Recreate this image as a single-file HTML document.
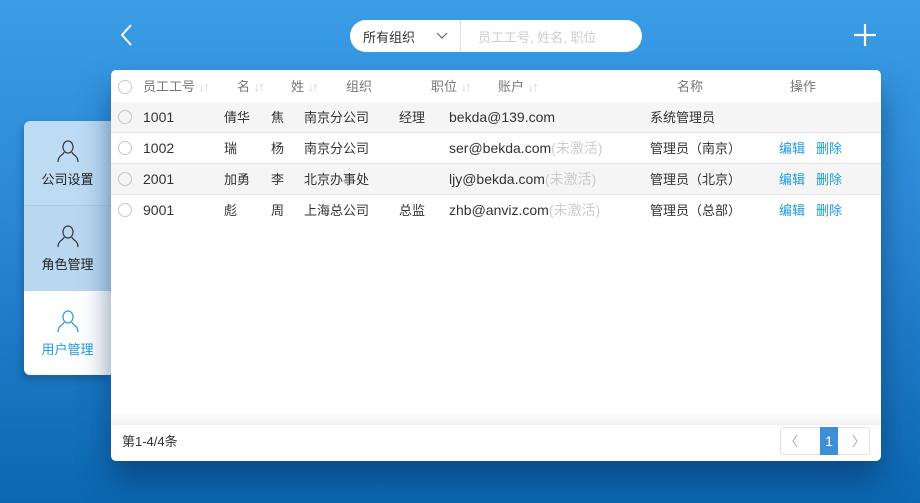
<!DOCTYPE html><html><head><meta charset="utf-8"><style>
*{margin:0;padding:0;box-sizing:border-box}
body{width:920px;height:503px;overflow:hidden;font-family:"Liberation Sans","Noto Sans CJK SC",sans-serif;background:linear-gradient(#3a9de6,#2a86d4 45%,#0b67b0);position:relative;color:#333}
.a{position:absolute}
.pill{left:350px;top:20px;width:292px;height:32px;background:#fff;border-radius:16px;font-size:13px}
.card{left:111px;top:70px;width:770px;height:391px;background:#fff;border-radius:5px;box-shadow:0 20px 30px rgba(5,50,100,.55)}
.side{left:24px;top:121px;width:87px;height:254px;border-radius:6px 0 0 6px;overflow:hidden;box-shadow:-2px 4px 8px rgba(0,0,0,.2)}
.si{height:85px;text-align:center;font-size:13px;color:#222;padding-top:18px}
.si svg{display:block;margin:0 auto 6px}
.row{position:absolute;left:0;width:770px;height:31px;font-size:13px;line-height:31px;color:#333;border-bottom:1px solid #e6e6e6}
.row span,.hd span{position:absolute}
.n{font-size:14px}
.rad{width:14px;height:14px;border:1.5px solid #c8c8c8;border-radius:50%;top:8px;left:7px}
.hd{position:absolute;left:0;top:0;width:770px;height:32px;font-size:13px;line-height:34px;color:#777;box-shadow:0 3px 4px rgba(0,0,0,.06)}
.g{color:#d4d4d4;font-style:normal;letter-spacing:-2px}.b{color:#1c9be0}.s{color:#ccc;font-style:normal}
</style></head><body>
<svg class="a" style="left:118px;top:23px" width="16" height="24"><path d="M13 2 L4 12 L13 22" stroke="#fff" stroke-width="2" fill="none"/></svg>
<svg class="a" style="left:853px;top:23px" width="24" height="24"><path d="M12 1V23M1 12H23" stroke="#fff" stroke-width="2.2"/></svg>
<div class="a pill"><span class="a" style="left:13px;top:7px;color:#333">所有组织</span>
<svg class="a" style="left:86px;top:12px" width="12" height="8"><path d="M1 1L6 6L11 1" stroke="#666" fill="none" stroke-width="1.2"/></svg>
<div class="a" style="left:110px;top:0;width:1px;height:32px;background:#ddd"></div>
<span class="a" style="left:128px;top:7px;color:#ccc">员工工号, 姓名, 职位</span></div>
<div class="a side">
<div class="si" style="background:#bddcf3;border-bottom:1px solid #a9cbe6"><svg width="22" height="24" viewBox="0 0 22 24"><path d="M11 2a5 6 0 1 0 .01 0zM7 13c0 3-6 3-6 10M15 13c0 3 6 3 6 10" stroke="#333" fill="none" stroke-width="1.2"/></svg>公司设置</div>
<div class="si" style="background:#b9d8f0"><svg width="22" height="24" viewBox="0 0 22 24"><path d="M11 2a5 6 0 1 0 .01 0zM7 13c0 3-6 3-6 10M15 13c0 3 6 3 6 10" stroke="#333" fill="none" stroke-width="1.2"/></svg>角色管理</div>
<div class="si" style="background:#fff;color:#1c9be0"><svg width="22" height="24" viewBox="0 0 22 24"><path d="M11 2a5 6 0 1 0 .01 0zM7 13c0 3-6 3-6 10M15 13c0 3 6 3 6 10" stroke="#1c9be0" fill="none" stroke-width="1.2"/></svg>用户管理</div>
</div>
<div class="a card">
<div class="hd"><div class="a rad" style="top:10px"></div><span style="left:32px">员工工号 <i class="g">↓↑</i></span><span style="left:126px">名 <i class="g">↓↑</i></span><span style="left:180px">姓 <i class="g">↓↑</i></span><span style="left:235px">组织</span><span style="left:320px">职位 <i class="g">↓↑</i></span><span style="left:387px">账户 <i class="g">↓↑</i></span><span style="left:566px">名称</span><span style="left:679px">操作</span></div>
<div class="row" style="top:32px;background:#f5f5f5"><div class="a rad"></div><span class="n" style="left:32px">1001</span><span style="left:113px">倩华</span><span style="left:160px">焦</span><span style="left:193px">南京分公司</span><span style="left:288px">经理</span><span class="n" style="left:338px">bekda@139.com</span><span style="left:539px">系统管理员</span></div>
<div class="row" style="top:63px"><div class="a rad"></div><span class="n" style="left:32px">1002</span><span style="left:113px">瑞</span><span style="left:160px">杨</span><span style="left:193px">南京分公司</span><span class="n" style="left:338px">ser@bekda.com<i class="s">(未激活)</i></span><span style="left:539px">管理员（南京）</span><span class="b" style="left:668px">编辑</span><span class="b" style="left:705px">删除</span></div>
<div class="row" style="top:94px;background:#f5f5f5"><div class="a rad"></div><span class="n" style="left:32px">2001</span><span style="left:113px">加勇</span><span style="left:160px">李</span><span style="left:193px">北京办事处</span><span class="n" style="left:338px">ljy@bekda.com<i class="s">(未激活)</i></span><span style="left:539px">管理员（北京）</span><span class="b" style="left:668px">编辑</span><span class="b" style="left:705px">删除</span></div>
<div class="row" style="top:125px;border:none"><div class="a rad"></div><span class="n" style="left:32px">9001</span><span style="left:113px">彪</span><span style="left:160px">周</span><span style="left:193px">上海总公司</span><span style="left:288px">总监</span><span class="n" style="left:338px">zhb@anviz.com<i class="s">(未激活)</i></span><span style="left:539px">管理员（总部）</span><span class="b" style="left:668px">编辑</span><span class="b" style="left:705px">删除</span></div>
<div class="a" style="left:0;top:343px;width:770px;height:12px;background:linear-gradient(#fff,#f0f0f0)"></div>
<span class="a" style="left:11px;top:361px;font-size:13px">第1-4/4条</span>
<div class="a" style="left:669px;top:357px;width:90px;height:28px;border:1px solid #e2e2e2;border-radius:3px;background:#fff"></div>
<div class="a" style="left:709px;top:357px;width:18px;height:28px;background:#3d8fd6;color:#fff;text-align:center;line-height:28px;font-size:14px">1</div>
<svg class="a" style="left:680px;top:363px" width="8" height="16"><path d="M6 2L2 8L6 14" stroke="#aaa" fill="none"/></svg>
<svg class="a" style="left:740px;top:363px" width="8" height="16"><path d="M2 2L6 8L2 14" stroke="#aaa" fill="none"/></svg>
</div>
</body></html>
